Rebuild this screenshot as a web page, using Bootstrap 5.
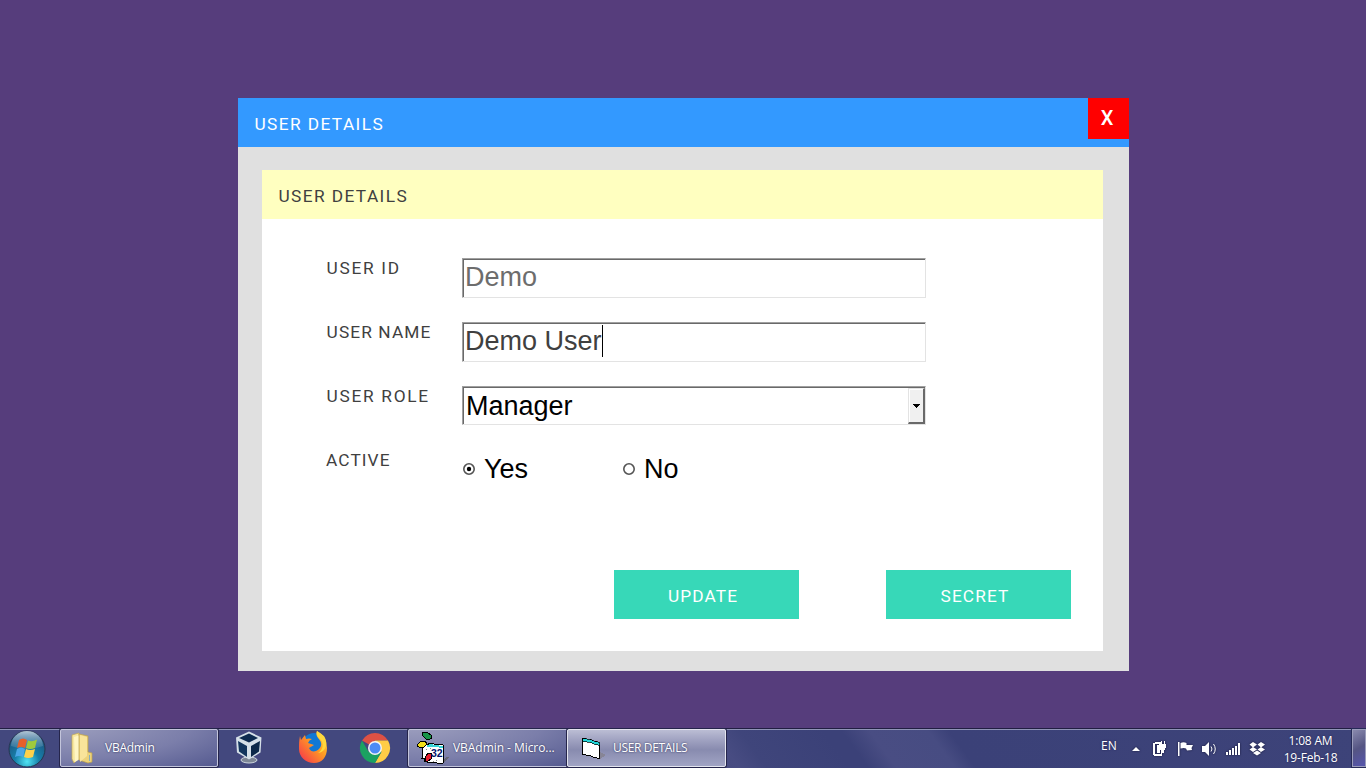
<!DOCTYPE html>
<html lang="en">
<head>
<meta charset="utf-8">
<meta name="viewport" content="width=device-width, initial-scale=1">
<title>User Details</title>
<link href="https://cdn.jsdelivr.net/npm/bootstrap@5.3.0/dist/css/bootstrap.min.css" rel="stylesheet">
<style>
body{background:#563d7c;width:1366px;height:768px;overflow:hidden;color:#404040;font-family:Roboto,sans-serif}
.desk{height:728px;padding-top:98px}
.win{width:891px;height:573px;margin-left:238px;background:#e0e0e0}
.cap{font:17.3px/22px Roboto,sans-serif;letter-spacing:1.1px;white-space:nowrap}
.win-title{height:49px;background:#39f;color:#fff;padding:15px 0 0 16.5px;letter-spacing:1.4px}
.btn-x,.btn-x:hover{width:41px;height:41px;margin-top:-15px;background:red;color:#fff;border:0;border-radius:0;padding:0 3px 2px 0;font:500 20px/20px Roboto,sans-serif;letter-spacing:0}
.pane{width:841px;height:481px;margin:23px 0 0 24px}
.pane-head{height:49px;background:#ffffc0;padding:15px 0 0 16.5px;letter-spacing:1.4px}
.fields{padding:39px 0 0 64px}
.field-row{height:64px}
.field-row .cap{width:136px;padding-left:.6px;margin-top:-1px}
.cap-id{letter-spacing:1.7px}
.cap-role{letter-spacing:1.7px}
.field-row .cap-active{padding-left:0}
.field{width:464px;height:40px;background:#fff;border:1px solid #a0a0a0;border-right-color:#e3e3e3;border-bottom-color:#e3e3e3;box-shadow:inset 1px 1px #696969;font:27px/37px "Liberation Sans",Arial,sans-serif;padding-left:2px;white-space:nowrap}
.role{height:39px;padding-left:3px}
.role>span:first-child{padding-top:1px}
.caret{width:1px;height:32px;background:#000;margin-top:2px}
.drop{width:17px;height:36px;margin-top:1px;background:#f0f0f0;border:1px solid #e3e3e3;border-right:2px solid #696969;border-bottom:2px solid #696969;box-shadow:inset 1px 1px #fff}
.opt{width:160px;height:36px;font:27px/39px "Liberation Sans",Arial,sans-serif;color:#000}
.btn-teal,.btn-teal:hover{width:185px;height:49px;border:0;border-radius:0;background:#37d8b8;color:#fff;padding:3px 7px 0 0}
.actions{padding:56px 32px 0 0;gap:87px}
.taskbar{height:40px;border-top:1px solid #211e42;box-shadow:inset 0 1px #8f94b6;color:#fff;font:12px/16px "Open Sans","Noto Sans",sans-serif;
background:linear-gradient(54deg,#43487e 0,#43487e 49%,#484c82 53%,#3f457b 55%,#3b4178 61%,#3b4178 62.3%,#494d83 64.3%,#474c82 68.5%,#3b4178 70%,#3d4379 100%)}
.tb{height:38px;border:1px solid #c3c5db;border-radius:2px;box-shadow:0 0 0 1px #25254b;background:radial-gradient(ellipse at 0 -20%,#a0a2c0 0,#7b7eaa 60%,#555a90 100%);text-shadow:0 0 2px #222650;white-space:nowrap}
.tb-vb{width:160px;margin-left:1px}
.tb-label{letter-spacing:-.25px}
.tb-vb .tb-label{letter-spacing:-.05px}
.tb-active{background:linear-gradient(#bbbdd4 0,#a0a2c1 28%,#888baf 55%,#a1a4c4 100%);border-color:#e4e5ef;margin-left:-1px}
.tb-active .tb-label{letter-spacing:-.33px}
.tray{text-shadow:0 0 2px #1d2050}
.peek{width:14px;height:38px;border:1px solid #9b9dbb;box-shadow:0 0 0 1px #262a57;background:linear-gradient(150deg,#8989ad,#555583 50%,#5655ad)}
svg{display:block;flex:none}
</style>
</head>
<body>
<main class="desk">
 <section class="win">
  <header class="win-title cap d-flex justify-content-between"><span>USER DETAILS</span><button class="btn btn-x" type="button">X</button></header>
  <div class="pane bg-white">
   <div class="pane-head cap">USER DETAILS</div>
   <div class="fields">
    <div class="field-row d-flex"><div class="cap cap-id">USER ID</div><div class="field" style="color:#6d6d6d">Demo</div></div>
    <div class="field-row d-flex"><div class="cap">USER NAME</div><div class="field d-flex"><span>Demo User</span><i class="caret"></i></div></div>
    <div class="field-row d-flex"><div class="cap cap-role">USER ROLE</div><div class="field role d-flex justify-content-between text-black"><span>Manager</span>
     <span class="drop"><svg width="14" height="33" shape-rendering="crispEdges"><path d="M4 15h7v1h-1v1H9v1H8v1H7v-1H6v-1H5v-1H4z"/></svg></span></div></div>
    <div class="field-row d-flex"><div class="cap cap-active">ACTIVE</div>
     <div class="opt d-flex"><svg width="22" height="36"><circle cx="7" cy="19" r="5.2" fill="#fff" stroke="#555" stroke-width="1.6"/><circle cx="7" cy="19" r="2.2"/></svg><span>Yes</span></div>
     <div class="opt d-flex"><svg width="22" height="36"><circle cx="7" cy="19" r="5.2" fill="#fff" stroke="#555" stroke-width="1.6"/></svg><span>No</span></div>
    </div>
   </div>
   <div class="actions d-flex justify-content-end"><button class="btn btn-teal cap" type="button">UPDATE</button><button class="btn btn-teal cap" type="button">SECRET</button></div>
  </div>
 </section>
</main>
<footer class="taskbar d-flex">
 <svg width="60" height="39" viewBox="0 0 60 39">
  <defs><radialGradient id="orb" cx=".5" cy=".85" r=".75"><stop stop-color="#50e4f4"/><stop offset=".45" stop-color="#167fa9"/><stop offset="1" stop-color="#1e527e"/></radialGradient>
  <linearGradient id="gloss" x2="0" y2="1"><stop stop-color="#d6e5ee" stop-opacity=".8"/><stop offset="1" stop-color="#7cadc7" stop-opacity=".2"/></linearGradient></defs>
  <circle cx="27" cy="20" r="18" fill="url(#orb)" stroke="#25364f"/><path d="M11 17a16 15 0 0 1 32 0q-16 6-32 0z" fill="url(#gloss)"/>
  <path d="M19 11q4-3 8 0l-2 8q-4-2-8 0z" fill="#e6602b"/><path d="M28 11.500q4 2 9-1l-2 8.500q-5 2-9 0z" fill="#9fca3d"/><path d="M17 20q4-3 8 0l-2 8q-4-2-8 0z" fill="#4aa6e6"/><path d="M26 20q4 2 9 0l-2 8q-5 2-9 0z" fill="#fed14b"/>
 </svg>
 <div class="tb d-flex align-items-center" style="width:158px">
  <svg width="44" height="36" viewBox="0 0 44 36"><path d="M11 5l7-2v25l-5 5-2-4z" fill="#f7e7a0" stroke="#c4a951" stroke-width=".7"/><path d="M13 7l6-2v24l-5 3z" fill="#fff5c3"/><path d="M18 4l9 2v16l4 1v9l-4 1-9-3z" fill="#ecd27a" stroke="#bca04e" stroke-width=".7"/><path d="M19 5l7 2v19l-7 6z" fill="#f9e49a"/><path d="M28.500 25v6" stroke="#8ab0bc"/></svg><span class="tb-label">VBAdmin</span>
 </div>
 <svg width="189" height="39" viewBox="218 0 189 39">
  <ellipse cx="249" cy="31" rx="8" ry="3" fill="#7e8796" stroke="#cfd7df"/><path d="M249 2.500l12.500 6-1 15-11.500 7-12-7-1-15z" fill="#d5e0e8"/><path d="M249 4.500l9 4.500-9 4.500-10-4.500z" fill="#0d2b50"/><path d="M238 12l9 5v11l-8-5.500z" fill="#13365e"/><path d="M260 12l-9 5v11l8-5.500z" fill="#0c2848"/>
  <defs><linearGradient id="fox" x1="1" x2="0" y2="1"><stop stop-color="#ffe346"/><stop offset=".42" stop-color="#ff9d22"/><stop offset="1" stop-color="#f42b51"/></linearGradient></defs>
  <g transform="translate(1 0)"><circle cx="313" cy="16" r="12" fill="#1178d5"/><path d="M299 7l1 4 4-5 1 4q3-1 6 0-3 1-4 4l6 2-5 3c2 5 7 4 10 1 4-4 2-8-1-11-2-3-2-5-1-7q10 5 10 17c0 9-5 15-13 15s-15-6-15-14c0-5 0-8 1-13z" fill="url(#fox)"/><path d="M316 2c-1 4 1 6 4 9 3 4 2 10-3 13 9-1 10-11 6-17z" fill="#ffd83d"/></g>
  <path d="M375 19L362.1 11.5A15 15 0 0 1 388 11.5H375z" fill="#dd5144"/><path d="M375 19V11.500H388A15 15 0 0 1 375 34l6.500-11.250z" fill="#ffcd46"/><path d="M375 34A15 15 0 0 1 362 11.500L368.500 22.750 381.500 22.750z" fill="#1ba261"/><circle cx="375" cy="19" r="7" fill="#f4f4f4"/><circle cx="375" cy="19" r="5.500" fill="#4c8bf5"/>
 </svg>
 <div class="tb tb-vb d-flex align-items-center">
  <svg width="44" height="36" viewBox="409 730 44 36" shape-rendering="crispEdges"><path d="M443 760l3-3h3l-5 6z" fill="#666674"/><path d="M423 744l4 1 3-2 4 1 9 1v18l-4 1-4-2-5 1-6-2v-3h-2z" fill="#fff" stroke="#000"/><path d="M427 745l4-1 4 1 8 1v2l-8-1h-8z" fill="#39d3d7"/><path d="M423 732h4l4 3 1 3-2 1h-4l-4-4z" fill="#169347" stroke="#000"/><path d="M418 744l3-3h4l2 3-3 3h-5l-2-1z" fill="#f2de18" stroke="#000"/><path d="M426 756l2-3 4 1-1 5-4 3-2-2z" fill="#e51e2e" stroke="#000"/><path d="M426 749h1v1h-1zM430 748h1v1h-1zM436 760h1v1h-1zM433 761h1v1h-1z" fill="#888"/><text x="431" y="757" font-family="Liberation Sans" font-weight="bold" font-size="10.500" fill="#00136a" style="text-shadow:none;letter-spacing:0">32</text></svg><span class="tb-label">VBAdmin - Micro...</span>
 </div>
 <div class="tb tb-active d-flex align-items-center" style="width:159px">
  <svg width="45" height="36" viewBox="568 730 45 36" shape-rendering="crispEdges"><path d="M600 752l6 3-6 4z" fill="#878596"/><path d="M582.500 738.500l7 1 5 2 5 1v16l-5-1-5-2-7-1z" fill="#fff" stroke="#000"/><path d="M582.500 738.500l7 1 5 2 5 1v3l-5-1-5-2-7-1z" fill="#20d6d8" stroke="#000" stroke-width=".7"/></svg><span class="tb-label">USER DETAILS</span>
 </div>
 <div class="tray d-flex ms-auto">
  <span style="padding-top:9px;width:28px">EN</span>
  <svg width="144" height="39" viewBox="1129 729 144 39" fill="#fff" style="filter:drop-shadow(0 0 1px #17183b)">
   <path d="M1132 751h8l-4-4z"/>
   <g shape-rendering="crispEdges"><path d="M1155 742h6v2h-6v10h7v2h-8v-1h-1v-12h2zM1157 745h3v8h-3z"/><path d="M1161 741h1v3h2v-3h1v3h1v4h-1v2h-1v3h-2v3h-2v-2h1v-4h-1v-2h-1v-4h2z"/></g>
   <path d="M1178 742h1.500v14h-1.500zM1180.500 743q3-1.500 6 0v2h6.500l-1.500 3 .5 2-5 .500-1-2q-2-1-5.500 0z"/>
   <path d="M1202 746h3l4-4v14l-4-4h-3z"/><path d="M1211 746.500q2 2.500 0 5M1213.500 744q3.500 5 0 10" fill="none" stroke="#fff"/>
   <path d="M1226 752h2v3h-2zM1229 750h2v5h-2zM1232 748h2v7h-2zM1235 746h2v9h-2zM1238 743h2v12h-2z"/>
   <path d="M1253 742l4 2.500-4 3-3.500-3zM1261 742l4 2.500-4 3-3.500-3zM1253 747l4 2.500-4 2.500-3.500-2.500zM1261 747l4 2.500-4 2.500-3.500-2.500zM1253 753l4-2.500 4 2.500-4 2.500z"/>
  </svg>
  <div class="text-center" style="width:75px;line-height:17px;padding-top:3px;letter-spacing:-.2px">1:08 AM<br>19-Feb-18</div>
  <div style="padding:0 0 0 4px"><div class="peek"></div></div>
 </div>
</footer>
<script src="https://cdn.jsdelivr.net/npm/bootstrap@5.3.0/dist/js/bootstrap.bundle.min.js"></script>
</body>
</html>
